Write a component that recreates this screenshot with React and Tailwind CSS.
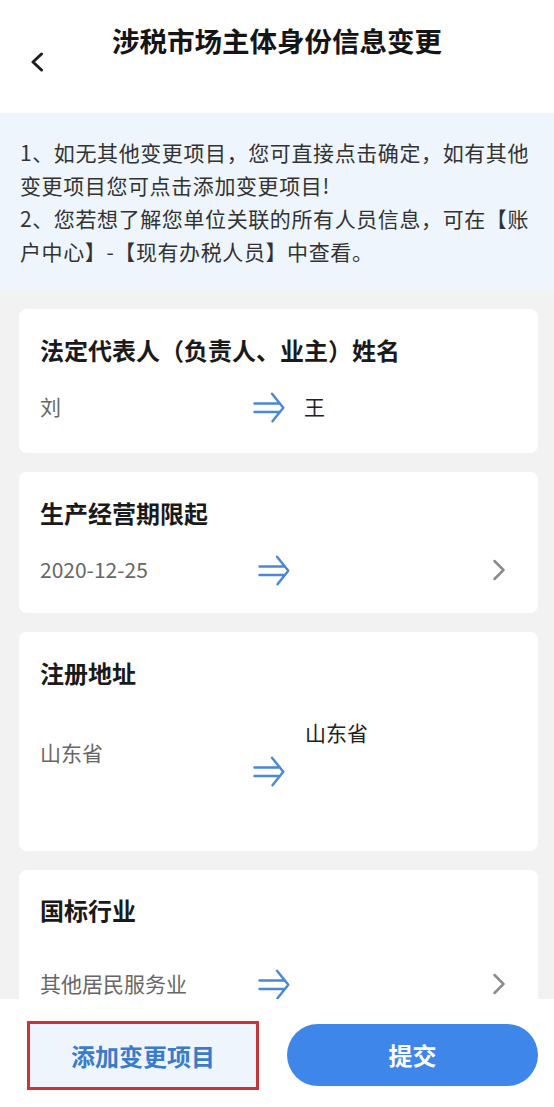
import React from "react";

function Arrow() {
  return (
    <svg width="32" height="31" viewBox="0 0 32 31" fill="none" stroke="#4a87d4" strokeWidth="2.4" strokeLinecap="round" strokeLinejoin="round">
      <path d="M1.5 11.5H27M1.5 20H27M19 1.8L30.3 15.7L19.5 29.3" />
    </svg>
  );
}

function Chevron() {
  return (
    <svg width="14" height="22" viewBox="0 0 14 22" fill="none" stroke="#8c8c8c" strokeWidth="2.5" strokeLinecap="round" strokeLinejoin="round">
      <path d="M2.5 2l9 9-9 9" />
    </svg>
  );
}

export default function App() {
  return (
    <div className="w-[554px] h-[1107px] flex flex-col bg-[#f2f2f2] overflow-hidden font-['Noto_Sans_CJK_SC','Noto_Sans',sans-serif]">
      <div className="flex-1 min-h-0 overflow-hidden">
        {/* header */}
        <div className="h-[113px] bg-white grid grid-cols-[60px_1fr_60px] items-start">
          <div className="pl-[30px] pt-[52px]">
            <svg width="14" height="20" viewBox="0 0 14 20" fill="none" stroke="#1f1f1f" strokeWidth="3" strokeLinecap="round" strokeLinejoin="round">
              <path d="M11.5 2L3 10l8.5 8" />
            </svg>
          </div>
          <div className="pt-[21px] text-center text-[27.5px] leading-[38px] font-bold text-[#151515]">
            涉税市场主体身份信息变更
          </div>
          <div />
        </div>

        {/* info */}
        <div className="bg-[#eef5fc] pl-[20px] pr-[14px] pt-[23px] pb-[22px] text-[21px] leading-[33px] tracking-[0.6px] text-[#333333]">
          <p>1、如无其他变更项目，您可直接点击确定，如有其他变更项目您可点击添加变更项目!</p>
          <p>2、您若想了解您单位关联的所有人员信息，可在【账户中心】-【现有办税人员】中查看。</p>
        </div>

        {/* cards */}
        <div className="pt-[19px] pl-[19px] pr-[16px] flex flex-col gap-[19px]">
          <div className="bg-white rounded-[8px] px-[21px] pt-[25px] pb-[26px]">
            <div className="text-[24px] leading-[32px] font-bold text-[#1a1a1a]">法定代表人（负责人、业主）姓名</div>
            <div className="mt-[21px] h-[40px] flex items-center text-[21px]">
              <div className="w-[213px] text-[#666666]">刘</div>
              <Arrow />
              <div className="ml-[19px] text-[#222222]">王</div>
            </div>
          </div>

          <div className="bg-white rounded-[8px] px-[21px] pt-[25px] pb-[23px]">
            <div className="text-[24px] leading-[32px] font-bold text-[#1a1a1a]">生产经营期限起</div>
            <div className="mt-[21px] h-[40px] flex items-center text-[21px]">
              <div className="w-[218px] text-[#666666]">2020-12-25</div>
              <Arrow />
              <div className="ml-auto mr-[11px] flex items-center">
                <Chevron />
              </div>
            </div>
          </div>

          <div className="bg-white rounded-[8px] px-[21px] pt-[25px] pb-[24px]">
            <div className="text-[24px] leading-[32px] font-bold text-[#1a1a1a]">注册地址</div>
            <div className="mt-[20px] h-[118px] flex items-start text-[21px]">
              <div className="w-[213px] mt-[28px] leading-[30px] text-[#666666]">山东省</div>
              <div className="mt-[47px]">
                <Arrow />
              </div>
              <div className="ml-[20px] mt-[8px] leading-[30px] text-[#222222]">山东省</div>
            </div>
          </div>

          <div className="bg-white rounded-[8px] px-[21px] pt-[24px] pb-[24px]">
            <div className="text-[24px] leading-[32px] font-bold text-[#1a1a1a]">国标行业</div>
            <div className="mt-[38px] h-[40px] flex items-center text-[21px]">
              <div className="w-[218px] text-[#666666]">其他居民服务业</div>
              <Arrow />
              <div className="ml-auto mr-[11px] flex items-center">
                <Chevron />
              </div>
            </div>
          </div>
        </div>
      </div>

      {/* footer */}
      <div className="h-[108px] shrink-0 bg-white flex items-start pt-[22px] pl-[27px] pr-[16px] gap-[28px]">
        <button className="w-[232px] h-[69px] border-[3px] border-[#c9343b] bg-[#eef5fd] text-[24px] font-bold text-[#3b7bcb] flex items-center justify-center">
          添加变更项目
        </button>
        <button className="flex-1 mt-[3px] h-[62px] rounded-full bg-[#3f86ea] text-[24px] font-bold text-white flex items-center justify-center">
          提交
        </button>
      </div>
    </div>
  );
}
